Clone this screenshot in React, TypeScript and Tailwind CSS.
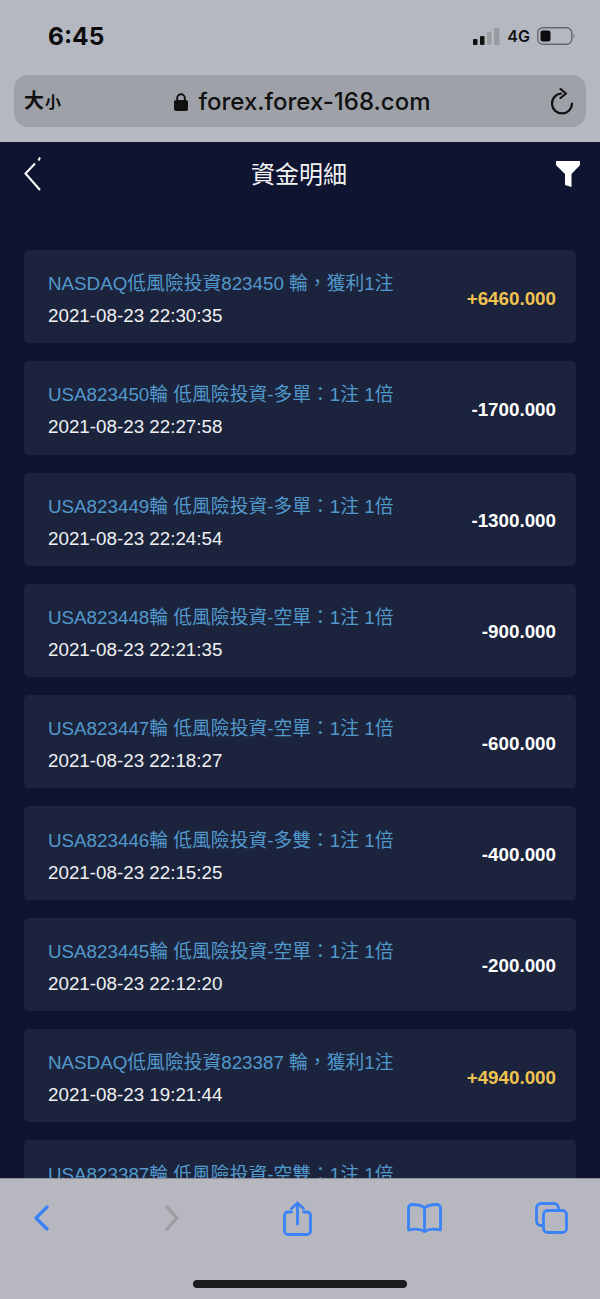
import React from 'react'

const rows = [
  { title: 'NASDAQ低風險投資823450 輪，獲利1注', time: '2021-08-23 22:30:35', amount: '+6460.000' },
  { title: 'USA823450輪 低風險投資-多單：1注 1倍', time: '2021-08-23 22:27:58', amount: '-1700.000' },
  { title: 'USA823449輪 低風險投資-多單：1注 1倍', time: '2021-08-23 22:24:54', amount: '-1300.000' },
  { title: 'USA823448輪 低風險投資-空單：1注 1倍', time: '2021-08-23 22:21:35', amount: '-900.000' },
  { title: 'USA823447輪 低風險投資-空單：1注 1倍', time: '2021-08-23 22:18:27', amount: '-600.000' },
  { title: 'USA823446輪 低風險投資-多雙：1注 1倍', time: '2021-08-23 22:15:25', amount: '-400.000' },
  { title: 'USA823445輪 低風險投資-空單：1注 1倍', time: '2021-08-23 22:12:20', amount: '-200.000' },
  { title: 'NASDAQ低風險投資823387 輪，獲利1注', time: '2021-08-23 19:21:44', amount: '+4940.000' },
  // the last row is cut by the toolbar, only its title peeks out
  { title: 'USA823387輪 低風險投資-空雙：1注 1倍', time: '', amount: '' },
]

const StatusBar = () => (
  <div className="h-[75px] flex items-start justify-between pl-[48px] pr-[24px] pt-[20px]">
    <span className="mt-[1px] font-['Inter',sans-serif] text-[24.5px] leading-[30px] font-bold text-[#0c0c0e]">6:45</span>
    <div className="flex items-center h-[30px] mt-[1px]">
      <svg width="27" height="17" viewBox="0 0 27 17">
        <rect x="0" y="11" width="4.500" height="6" rx="1" fill="#111" />
        <rect x="7" y="8" width="4.500" height="9" rx="1" fill="#111" />
        <rect x="14" y="4" width="4.500" height="13" rx="1" fill="#9a9ca2" />
        <rect x="21" y="0" width="5.500" height="17" rx="1" fill="#9a9ca2" />
      </svg>
      <span className="ml-[7px] font-['Inter',sans-serif] text-[16px] font-semibold text-[#111] leading-none">4G</span>
      <svg className="ml-[7px]" width="39" height="18" viewBox="0 0 39 18">
        <rect x="0.700" y="0.700" width="34" height="16.600" rx="5" fill="none" stroke="#66686d" strokeWidth="1.400" />
        <rect x="3.500" y="3.500" width="10" height="11" rx="2" fill="#0c0c0e" />
        <path d="M36.500 6.500 Q38.500 9 36.500 11.500 Z" fill="#66686d" />
      </svg>
    </div>
  </div>
)

const UrlBar = () => (
  <div className="mx-[14px] h-[52px] rounded-[14px] bg-[#9ea1a8] flex items-center justify-between pl-[10px] pr-[13px]">
    <span className="font-bold text-[#111] flex items-baseline leading-none">
      <span className="text-[20px]">大</span>
      <span className="ml-[1px] text-[16px]">小</span>
    </span>
    <div className="flex items-center mr-[8px] pt-[2px]">
      <svg width="14" height="18" viewBox="0 0 14 18">
        <path d="M3.200 8V5a3.800 3.800 0 0 1 7.600 0V8" fill="none" stroke="#111" strokeWidth="1.900" />
        <rect x="0" y="7" width="14" height="11" rx="2" fill="#111" />
      </svg>
      <span className="ml-[11px] font-['Inter',sans-serif] text-[24px] leading-none text-[#111] font-medium">forex.forex-168.com</span>
    </div>
    <svg width="22" height="27" viewBox="0 0 22 27" className="mt-[1px]">
      <path d="M10 5.500A10 10 0 1 0 21 15.500" fill="none" stroke="#111" strokeWidth="2.200" strokeLinecap="round" />
      <path d="M9.500 1L15 5.500L9.500 10" fill="none" stroke="#111" strokeWidth="2.200" strokeLinecap="round" strokeLinejoin="round" />
    </svg>
  </div>
)

const Row = ({ title, time, amount }: { title: string; time: string; amount: string }) => (
  <div className="h-[93.3px] mb-[18px] shrink-0 rounded-[5px] bg-[#1c243d] flex items-center justify-between pl-[24px] pr-[20px]">
    <div className="pt-[7px]">
      <div className="text-[18.8px] leading-[26px] text-[#5199cc] whitespace-nowrap">{title}</div>
      <div className="mt-[6px] h-[26px] text-[18.8px] leading-[26px] text-[#f0f1f3] whitespace-nowrap">{time}</div>
    </div>
    <div className={`pt-[4px] text-[18.8px] font-bold ${amount[0] === '+' ? 'text-[#f0c34e]' : 'text-white'}`}>{amount}</div>
  </div>
)

const BottomBar = () => (
  <div className="h-[121px] shrink-0 bg-[#b6b7bf] border-t border-[#8f9098] relative z-10">
    <div className="flex items-center pl-[34px] h-[78px]">
      <svg width="15" height="26" viewBox="0 0 15 26" fill="none" stroke="#3b82f6" strokeWidth="3.200" strokeLinecap="round" strokeLinejoin="round">
        <path d="M13 2L2 13L13 24" />
      </svg>
      <svg className="ml-[116px]" width="14" height="26" viewBox="0 0 14 26" fill="none" stroke="#9c9da3" strokeWidth="3.200" strokeLinecap="round" strokeLinejoin="round">
        <path d="M2 2L12 13L2 24" />
      </svg>
      <svg className="ml-[104px]" width="29" height="35" viewBox="0 0 29 35" fill="none" stroke="#3b82f6" strokeWidth="2.800" strokeLinecap="round" strokeLinejoin="round">
        <path d="M8.500 11H5a3.500 3.500 0 0 0-3.500 3.500v15A3.500 3.500 0 0 0 5 33.500h19a3.500 3.500 0 0 0 3.500-3.500v-15.500A3.500 3.500 0 0 0 24 11h-3.500" />
        <path d="M14.500 23V2M8.500 7.500L14.500 2l6 5.500" />
      </svg>
      <svg className="ml-[95px]" width="35" height="30" viewBox="0 0 35 30" fill="none" stroke="#3b82f6" strokeWidth="2.800" strokeLinecap="round" strokeLinejoin="round">
        <path d="M17.500 5C15 2.500 10 1.500 5 1.500 3 1.500 1.500 3 1.500 5V27c6-1.500 12-1 16 1.500 4-2.500 10-3 16-1.500V5c0-2-1.500-3.500-3.500-3.500-5 0-10 1-12.500 3.500zM17.500 5v23.500" />
      </svg>
      <svg className="ml-[93px]" width="33" height="32" viewBox="0 0 33 32" fill="none" stroke="#3b82f6" strokeWidth="2.800" strokeLinejoin="round">
        <rect x="8.500" y="8.500" width="23" height="22" rx="4" />
        <path d="M8.500 23.500H6A4.500 4.500 0 0 1 1.500 19V6A4.500 4.500 0 0 1 6 1.500h13A4.500 4.500 0 0 1 23.500 6v2.500" />
      </svg>
    </div>
    <div className="mx-auto mt-[23px] w-[214px] h-[8px] rounded-full bg-[#1c1c1e]" />
  </div>
)

export default function App() {
  return (
    <div className="w-[600px] h-[1299px] flex flex-col overflow-hidden bg-[#0f1531] font-['Liberation_Sans','Noto_Sans_CJK_TC',sans-serif]">
      <div className="h-[142px] shrink-0 bg-[#b5b8c0]">
        <StatusBar />
        <UrlBar />
      </div>
      <div className="h-[108px] shrink-0 flex items-start justify-between pl-[24px] pr-[20px] pt-[15px]">
        <svg width="18" height="34" viewBox="0 0 18 34" fill="none" stroke="#fff" strokeWidth="2">
          <path d="M16 0.500L14.500 3.500M11 6.500L1.500 16.500L16 33" />
        </svg>
        <h1 className="text-[24px] leading-[34px] text-[#f4f4f6] font-normal pt-[1px]">資金明細</h1>
        <svg width="24" height="26" viewBox="0 0 24 26" className="mt-[4px]">
          <path d="M0 0H24V4L15.500 13V26L9 24V13L0 4Z" fill="#fff" />
        </svg>
      </div>
      <div className="flex-1 min-h-0 overflow-hidden px-[24px] flex flex-col">
        {rows.map((r) => (
          <Row key={r.title} {...r} />
        ))}
      </div>
      <BottomBar />
    </div>
  )
}
